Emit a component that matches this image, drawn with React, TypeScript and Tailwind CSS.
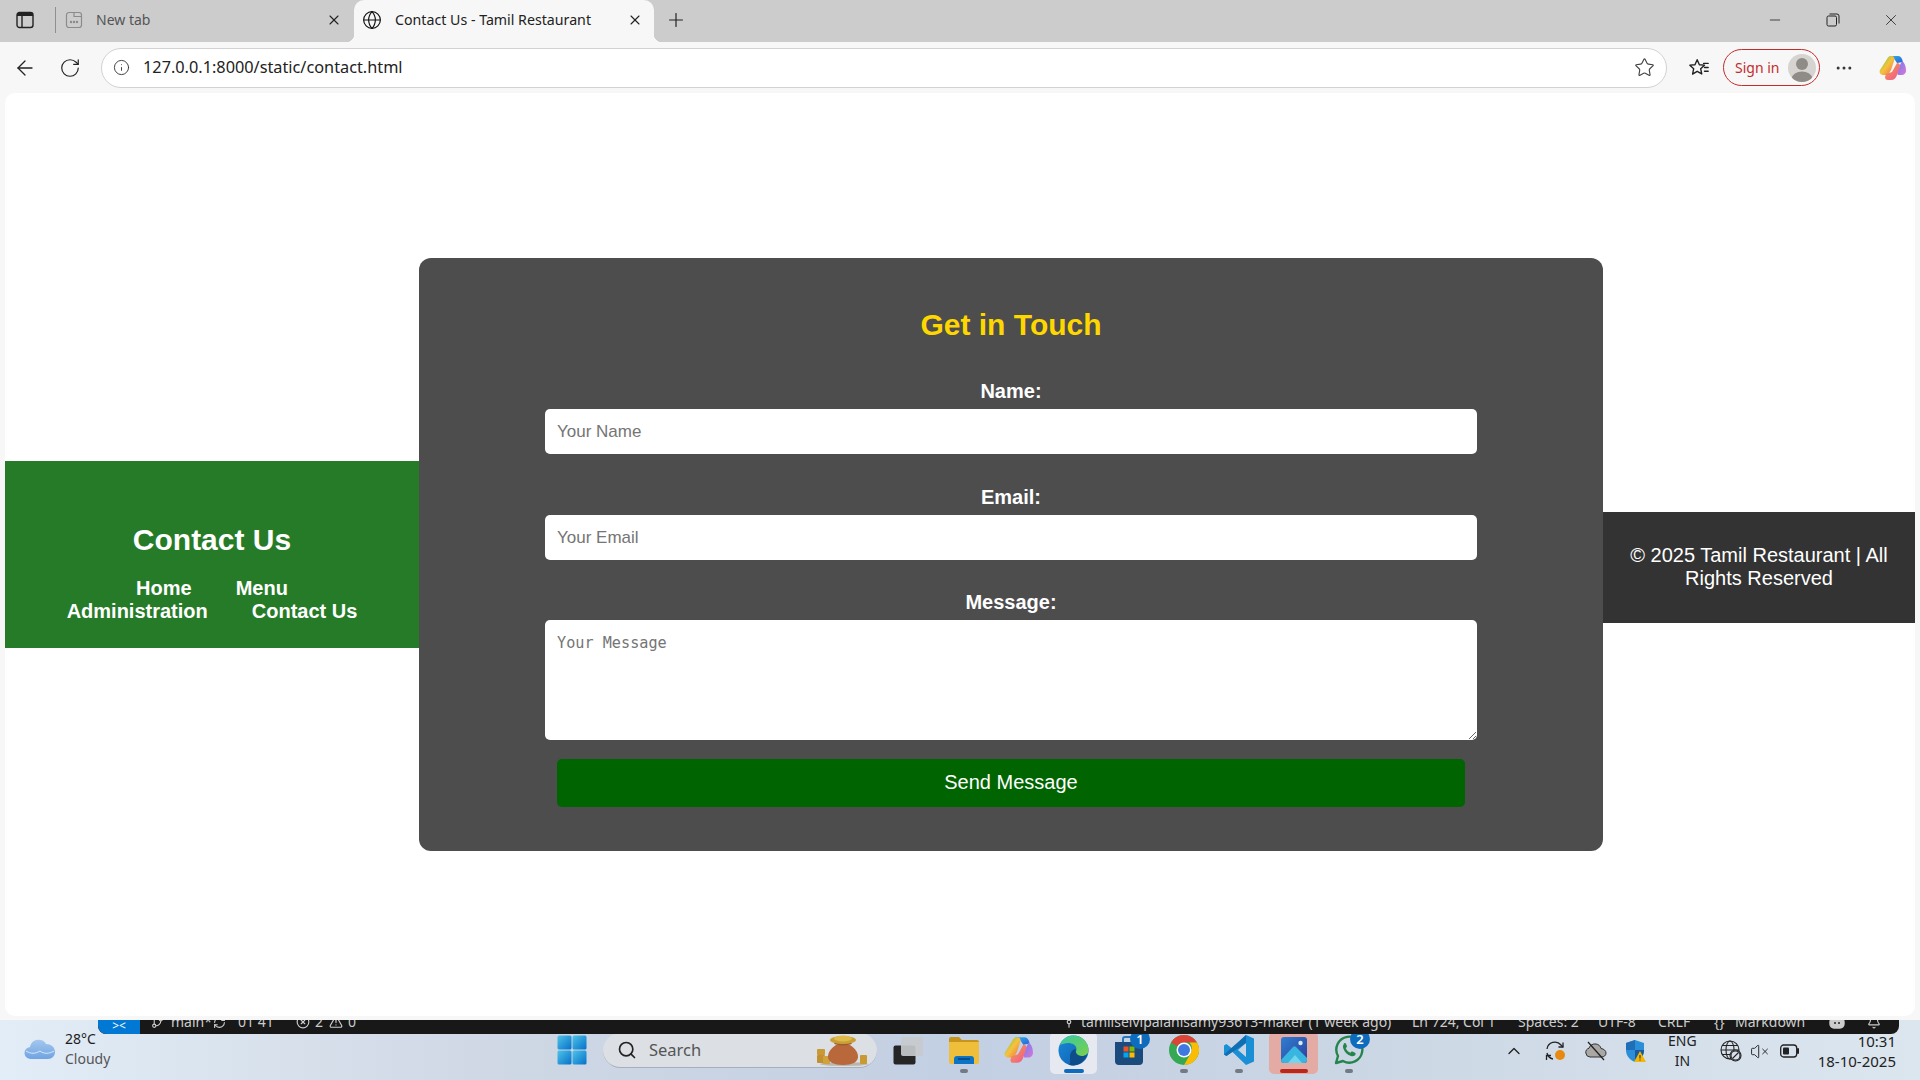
import React from "react";
import {
  ArrowLeft, RotateCw, Info, Star, Globe, X, Plus, Minus, MoreHorizontal, Search, ChevronUp,
  GitBranch, RefreshCw, XCircle, AlertTriangle, Bell, GitCommitVertical, VolumeX,
} from "lucide-react";

const CopilotIcon = ({ size = 28 }: { size?: number }) => (
  <svg width={size} height={size} viewBox="0 0 28 28">
    <defs>
      <linearGradient id="c1" x1="0" y1="0" x2="1" y2="1"><stop offset="0" stopColor="#2fb4e8" /><stop offset="1" stopColor="#2a5fd8" /></linearGradient>
      <linearGradient id="c2" x1="0" y1="0" x2="1" y2="1"><stop offset="0" stopColor="#5ac85a" /><stop offset="0.5" stopColor="#f5c33c" /><stop offset="1" stopColor="#ef6a4a" /></linearGradient>
      <linearGradient id="c3" x1="0" y1="0" x2="1" y2="1"><stop offset="0" stopColor="#6a7cf0" /><stop offset="1" stopColor="#d977d8" /></linearGradient>
      <linearGradient id="c4" x1="0" y1="0" x2="1" y2="1"><stop offset="0" stopColor="#f4a03a" /><stop offset="1" stopColor="#f0569a" /></linearGradient>
    </defs>
    <path d="M10 2h9c2 0 3 1 4 3l1 3-6 1-2-3c-1-2-3-3-6-4z" fill="url(#c1)" />
    <path d="M8 5c1-2 2-3 4-3 3 0 4 2 3 5l-3 9-3 5H4c-3 0-4-3-3-5z" fill="url(#c2)" />
    <path d="M23 7c3 2 4 6 4 10 0 2-2 4-4 4h-4l-1-2 3-8z" fill="url(#c3)" />
    <path d="M7 20l6-2 5-9c2 0 3 1 3 3l-3 9c-1 3-3 5-6 5H9c-2 0-3-1-3-3z" fill="url(#c4)" />
  </svg>
);

const FavIcon = () => (
  <svg width="22" height="22" viewBox="0 0 24 24" fill="none" stroke="#222" strokeWidth="1.5" strokeLinejoin="round">
    <path d="M10 3l2.4 5.4 5.6.5-4.2 3.900 1.200 5.700L10 15.600l-5 3 1.200-5.800L2 8.900l5.600-.5z" />
    <path d="M17 7h5M18 11.500h4M18 15.500h4" strokeLinecap="round" />
  </svg>
);

const RestoreIcon = () => (
  <svg width="14" height="14" viewBox="0 0 14 14" fill="none" stroke="#222" strokeWidth="1">
    <rect x="1" y="3" width="9.500" height="10" rx="1.500" />
    <path d="M3.500 1h7.500a2 2 0 0 1 2 2v7.500" />
  </svg>
);

const NewTabIcon = () => (
  <svg width="18" height="18" viewBox="0 0 18 18" fill="none" stroke="#8b8b8b" strokeWidth="1.200">
    <rect x="1.500" y="1.500" width="15" height="15" rx="2.500" />
    <path d="M9 1.500v4h7.500" />
    <circle cx="6" cy="11" r=".6" fill="#8b8b8b" />
    <circle cx="9" cy="11" r=".6" fill="#8b8b8b" />
    <circle cx="12" cy="11" r=".6" fill="#8b8b8b" />
  </svg>
);

const SideTabIcon = () => (
  <svg width="18" height="18" viewBox="0 0 18 18" fill="none">
    <rect x="1" y="1.500" width="16" height="15" rx="2.500" stroke="#222" strokeWidth="1.400" />
    <path d="M1 5V4a2.500 2.500 0 0 1 2.500-2.500h11A2.500 2.500 0 0 1 17 4v1z" fill="#222" />
    <path d="M6 5v11" stroke="#222" strokeWidth="1.400" />
  </svg>
);

const Avatar = () => (
  <span className="flex h-[28px] w-[28px] items-center justify-center overflow-hidden rounded-full bg-[#d6d4d1]">
    <svg width="28" height="28" viewBox="0 0 28 28">
      <circle cx="14" cy="10" r="6" fill="#8f8b87" />
      <ellipse cx="14" cy="24" rx="10" ry="6.500" fill="#8f8b87" />
    </svg>
  </span>
);

const WeatherCloud = () => (
  <svg width="32" height="24" viewBox="0 0 32 24">
    <defs>
      <linearGradient id="wc" x1="0" y1="0" x2="0" y2="1"><stop offset="0" stopColor="#a4c7ee" /><stop offset="1" stopColor="#6fa4e2" /></linearGradient>
    </defs>
    <path d="M7 22a6 6 0 0 1-1-12c1-5 5-8 10-7 3 0 5 2 6 4 5 0 9 3 9 8 0 4-3 7-7 7z" fill="url(#wc)" />
    <path d="M2 14c5 3 9 3 14 0 4 3 9 3 14 0" stroke="#d9e8f8" strokeWidth="1" fill="none" />
  </svg>
);

const WinLogo = () => (
  <svg width="30" height="30" viewBox="0 0 30 30">
    <defs>
      <linearGradient id="wl" x1="0" y1="0" x2="1" y2="1"><stop offset="0" stopColor="#4fc3e8" /><stop offset="1" stopColor="#0571c9" /></linearGradient>
    </defs>
    <rect x="0.500" y="0.500" width="14" height="14" rx="1.500" fill="url(#wl)" />
    <rect x="15.500" y="0.500" width="14" height="14" rx="1.500" fill="url(#wl)" />
    <rect x="0.500" y="15.500" width="14" height="14" rx="1.500" fill="url(#wl)" />
    <rect x="15.500" y="15.500" width="14" height="14" rx="1.500" fill="url(#wl)" />
  </svg>
);

const PotIcon = () => (
  <svg width="54" height="32" viewBox="0 0 54 32">
    <ellipse cx="28" cy="30" rx="24" ry="2" fill="#b9b6ad" />
    <rect x="1" y="15" width="8" height="6" rx="1" fill="#c99a33" />
    <rect x="1" y="21" width="8" height="8" rx="1" fill="#c29030" />
    <rect x="7" y="22" width="7" height="8" rx="1" fill="#d0a23c" />
    <rect x="44" y="21" width="7" height="9" rx="1" fill="#c99a33" />
    <path d="M20 11c-6 4-8 8-8 12 0 5 6 8 15 8s15-3 15-8c0-4-2-8-8-12z" fill="#b8683a" />
    <ellipse cx="27" cy="9" rx="9" ry="2.500" fill="#a05a30" />
    <ellipse cx="27" cy="6" rx="13" ry="4" fill="#c9a035" />
    <ellipse cx="27" cy="4.500" rx="9" ry="3" fill="#dfb94a" />
  </svg>
);

const TaskViewIcon = () => (
  <svg width="31" height="29" viewBox="0 0 31 29">
    <rect x="0.500" y="9.500" width="22" height="19" rx="2" fill="#262626" />
    <rect x="8" y="1" width="22" height="19" rx="2" fill="#c7cacd" fillOpacity="0.92" />
  </svg>
);

const FolderIcon = () => (
  <svg width="30" height="27" viewBox="0 0 30 27">
    <path d="M0 2a2 2 0 0 1 2-2h8l3 3h15a2 2 0 0 1 2 2v4H0z" fill="#c8951c" />
    <path d="M0 5h30v20a2 2 0 0 1-2 2H2a2 2 0 0 1-2-2z" fill="#efbf3c" />
    <path d="M5 22a3 3 0 0 1 3-3h14a3 3 0 0 1 3 3v5H5z" fill="#0c74c4" />
    <path d="M9 22h12" stroke="#083f78" strokeWidth="1.500" />
  </svg>
);

const EdgeIcon = () => (
  <svg width="31" height="31" viewBox="0 0 31 31">
    <defs>
      <linearGradient id="e1" x1="0" y1="0" x2="1" y2="1"><stop offset="0" stopColor="#36c9a4" /><stop offset="1" stopColor="#7cd04a" /></linearGradient>
      <linearGradient id="e2" x1="0" y1="0" x2="1" y2="1"><stop offset="0" stopColor="#1a8ad8" /><stop offset="1" stopColor="#0e5cae" /></linearGradient>
    </defs>
    <circle cx="15.500" cy="15.500" r="15" fill="url(#e2)" />
    <path d="M2 10C5 3 10 .5 15.500 .5 24 .5 30.500 7 30.500 15c0 4-3 6-7 6-3 0-6-1.500-6-3.500 0-1 1-1.500 1-3.500C18.500 10 14 8 10 8c-3 0-6 1-8 2z" fill="url(#e1)" />
    <path d="M12 22c0-5 3-8 6-8-1 2 0 7 6 7 2 0 4-.5 5-2-2 7-8 11.500-14 11.500-2 0-3.500-.5-5-1 3 0 2-3.500 2-7.500z" fill="#0f4c8a" />
  </svg>
);

const StoreIcon = () => (
  <svg width="30" height="30" viewBox="0 0 30 30">
    <path d="M1 7h28v19a4 4 0 0 1-4 4H5a4 4 0 0 1-4-4z" fill="#1b4a7c" />
    <path d="M9 7V4a2 2 0 0 1 2-2h8a2 2 0 0 1 2 2v3" fill="none" stroke="#2a76b8" strokeWidth="2" />
    <rect x="9.500" y="11.500" width="5" height="5" fill="#f25022" />
    <rect x="15.500" y="11.500" width="5" height="5" fill="#7fba00" />
    <rect x="9.500" y="17.500" width="5" height="5" fill="#00a4ef" />
    <rect x="15.500" y="17.500" width="5" height="5" fill="#ffb900" />
  </svg>
);

const ChromeIcon = () => (
  <svg width="30" height="30" viewBox="0 0 30 30">
    <circle cx="15" cy="15" r="15" fill="#34a853" />
    <path d="M15 0a15 15 0 0 1 13 7.500H15a7.500 7.500 0 0 0-6.500 3.750L2 7.500A15 15 0 0 1 15 0z" fill="#db4437" />
    <path d="M28 7.500A15 15 0 0 1 15 30l6.500-11.250A7.500 7.500 0 0 0 22.500 15a7.500 7.500 0 0 0-2-7.500z" fill="#fbbc05" />
    <circle cx="15" cy="15" r="7.500" fill="#fff" />
    <circle cx="15" cy="15" r="6" fill="#3f78e0" />
  </svg>
);

const VSCodeIcon = () => (
  <svg width="30" height="30" viewBox="0 0 30 30">
    <path d="M22 0l8 3.500v23L22 30 8 16.500 2.500 21 0 19.500v-9L2.500 9 8 13.500z M22 8l-8 7 8 7z" fill="#1a8fd6" fillRule="evenodd" />
    <path d="M0 19.500L22 0v8L2.500 21z" fill="#0f6fb4" />
  </svg>
);

const PhotosIcon = () => (
  <svg width="26" height="26" viewBox="0 0 26 26">
    <defs>
      <linearGradient id="p1" x1="0" y1="0" x2="1" y2="1"><stop offset="0" stopColor="#2f7fd2" /><stop offset="1" stopColor="#2c3f9a" /></linearGradient>
    </defs>
    <rect width="26" height="26" rx="3" fill="url(#p1)" />
    <circle cx="19.500" cy="6" r="2.200" fill="#dbe8f8" />
    <path d="M0 23l12-13c1-1 2-1 3 0l11 11v2a3 3 0 0 1-3 3H3a3 3 0 0 1-3-3z" fill="#38b6e0" />
    <path d="M7 26l7-8 7 8z" fill="#70d6ee" />
  </svg>
);

const WhatsAppIcon = () => (
  <svg width="30" height="30" viewBox="0 0 30 30" fill="none">
    <path d="M2 28l2-7A13 13 0 1 1 9 26z" stroke="#25844c" strokeWidth="2.400" strokeLinejoin="round" />
    <path d="M10.500 8.500c-1.500 1-2 3-1 5.500 1.500 3.500 4 6 7.500 7 2 .5 4 0 4.500-1.500.3-1 0-1.500-.5-1.800l-2.500-1.200c-.5-.2-1-.1-1.300.3l-.7 1c-2.200-.7-4-2.500-4.800-4.700l.9-.8c.4-.4.5-.8.300-1.300l-1-2.400c-.4-.6-1.500-.7-2.400-.1z" fill="#25844c" />
  </svg>
);

const SyncBadgeIcon = () => (
  <svg width="22" height="22" viewBox="0 0 22 22" fill="none" stroke="#222" strokeWidth="1.300">
    <path d="M3 9a8 8 0 0 1 14-4l2 2" /><path d="M19 2.500V7h-4.500" />
    <path d="M3 13a8 8 0 0 0 6 6" /><path d="M2.500 20v-4.500H7" />
    <circle cx="16" cy="15" r="5" fill="#e88a10" stroke="none" />
  </svg>
);

const CloudOffFilled = () => (
  <svg width="22" height="20" viewBox="0 0 22 20">
    <path d="M5 16a4.500 4.500 0 0 1-1-8.800C5 4 8 2.500 11 3c2.500.3 4.500 2 5 4.500 2.800.3 5 2.300 5 4.500 0 2.500-2 4-4.500 4z" fill="#a9a8a4" stroke="#333" strokeWidth="1" />
    <path d="M3 1l16 18" stroke="#222" strokeWidth="1.300" />
  </svg>
);

const ShieldIcon = () => (
  <svg width="22" height="24" viewBox="0 0 22 24">
    <path d="M10 1l9 3v7c0 6-4 10-9 12-5-2-9-6-9-12V4z" fill="#2a8fd8" />
    <path d="M1 11h9V1l-9 3z" fill="#1e6fb8" />
    <path d="M10 11h9c0 6-4 10-9 12z" fill="#175a9e" />
    <path d="M15 12l6 11H9z" fill="#f2b705" />
    <path d="M15 16v3.500M15 20.500v1" stroke="#222" strokeWidth="1" />
  </svg>
);

const GlobeOff = () => (
  <svg width="22" height="22" viewBox="0 0 22 22" fill="none" stroke="#222" strokeWidth="1.100">
    <circle cx="10" cy="10" r="9" />
    <ellipse cx="10" cy="10" rx="4" ry="9" />
    <path d="M1 10h18M2 5.500h16M2 14.500h16" />
    <circle cx="15.500" cy="15.500" r="5.500" fill="#d7e1eb" />
    <circle cx="15.500" cy="15.500" r="4.500" />
    <path d="M12.500 18.500l6-6" />
  </svg>
);

const BatteryIcon = () => (
  <svg width="20" height="14" viewBox="0 0 20 14" fill="none">
    <rect x="0.700" y="1" width="16" height="12" rx="3" stroke="#222" strokeWidth="1.300" />
    <rect x="3" y="3.500" width="6" height="7" rx="1" fill="#222" />
    <path d="M18 5v4" stroke="#222" strokeWidth="2" strokeLinecap="round" />
  </svg>
);

const CopilotStatus = () => (
  <svg width="16" height="14" viewBox="0 0 16 14" fill="none" stroke="#cccccc" strokeWidth="1.400">
    <rect x="1" y="3" width="14" height="10" rx="4" fill="#cccccc" />
    <path d="M6 7v2M10 7v2" stroke="#181818" />
  </svg>
);

const TaskSlot = ({ children, indicator, active, pink, badge }: { children: React.ReactNode; indicator?: string; active?: boolean; pink?: boolean; badge?: string }) => (
  <div className="relative flex h-[42px] w-[55px] shrink-0 items-center justify-center">
    {active && <span className="absolute inset-x-[4px] inset-y-0 rounded-[5px] bg-[#e6e9ef]" />}
    {pink && <span className="absolute inset-x-[3px] inset-y-0 rounded-[5px] bg-[#e4aaa4]" />}
    <span className="relative mb-[6px] flex">{children}</span>
    {badge && (
      <span className="absolute right-[6px] top-[-3px] flex h-[20px] w-[20px] items-center justify-center rounded-full bg-[#0f6cbd] font-['Noto_Sans'] text-[13px] font-semibold leading-none text-white">{badge}</span>
    )}
    {indicator && <span className={`absolute bottom-[1px] left-1/2 h-[4px] -translate-x-1/2 rounded-full ${indicator}`} />}
  </div>
);

const Field = ({ label, placeholder }: { label: string; placeholder: string }) => (
  <div className="flex flex-col items-center">
    <label className="pt-px text-[20px] font-bold leading-[22px] text-white">{label}</label>
    <input placeholder={placeholder} className="mt-[7px] h-[45px] w-[932px] rounded-[5px] bg-white px-[12px] text-[17px] text-black outline-none placeholder:text-[#757575]" />
  </div>
);

export default function App() {
  return (
    <div className="flex h-screen w-full flex-col overflow-hidden bg-[#f7f7f7] font-['Noto_Sans',sans-serif]">
      {/* tab strip */}
      <div className="flex h-[42px] shrink-0 items-center bg-[#cccccc]">
        <div className="mb-[3px] ml-[16px] flex w-[18px] justify-center"><SideTabIcon /></div>
        <div className="mb-[3px] ml-[21px] h-[26px] w-px bg-[#8f8f8f]" />
        <div className="mb-[3px] ml-[9px] flex"><NewTabIcon /></div>
        <span className="mb-[3px] ml-[13px] w-[230px] text-[14px] text-[#555]">New tab</span>
        <X size={16} strokeWidth={1.600} className="mb-[3px] text-[#222]" />
        <div className="relative ml-[12px] flex h-[42px] w-[300px] items-center rounded-t-[10px] bg-[#f7f7f7] pb-[3px] pl-[8px]">
          <span className="absolute bottom-0 left-[-8px] h-[8px] w-[8px] bg-[radial-gradient(circle_at_0_0,#cccccc_8px,#f7f7f7_8.500px)]" />
          <span className="absolute bottom-0 right-[-8px] h-[8px] w-[8px] bg-[radial-gradient(circle_at_100%_0,#cccccc_8px,#f7f7f7_8.500px)]" />
          <Globe size={20} strokeWidth={1.400} className="text-[#111]" />
          <span className="ml-[13px] w-[232px] whitespace-nowrap text-[14.200px] text-[#222]">Contact Us - Tamil Restaurant</span>
          <X size={16} strokeWidth={1.600} className="text-[#222]" />
        </div>
        <Plus size={22} strokeWidth={1.300} className="mb-[3px] ml-[11px] text-[#222]" />
        <div className="ml-auto mb-[3px] flex items-center">
          <Minus size={16} strokeWidth={1.200} className="text-[#222]" />
          <div className="ml-[43px] flex"><RestoreIcon /></div>
          <X size={18} strokeWidth={1.100} className="ml-[42px] mr-[20px] text-[#222]" />
        </div>
      </div>
      {/* toolbar */}
      <div className="flex h-[51px] shrink-0 items-center bg-[#f7f7f7]">
        <ArrowLeft size={24} strokeWidth={1.300} className="ml-[13px] text-[#222]" />
        <RotateCw size={22} strokeWidth={1.300} className="ml-[22px] text-[#222]" />
        <div className="ml-[20px] flex h-[40px] w-[1566px] items-center rounded-full border border-[#d2d2d2] bg-white pl-[11px] pr-[11px]">
          <Info size={17} strokeWidth={1.300} className="text-[#333]" />
          <span className="ml-[13px] text-[16.300px] text-[#222]">127.0.0.1:8000/static/contact.html</span>
          <Star size={21} strokeWidth={1.300} className="ml-auto text-[#444]" />
        </div>
        <div className="ml-[21px] flex"><FavIcon /></div>
        <div className="ml-[13px] flex h-[37px] w-[97px] items-center justify-between rounded-full border-[1.500px] border-[#c42b2b] pl-[11px] pr-[3px]">
          <span className="text-[14px] text-[#c42b2b]">Sign in</span>
          <Avatar />
        </div>
        <MoreHorizontal size={20} strokeWidth={1.600} className="ml-[14px] text-[#333]" />
        <div className="ml-[25px] flex"><CopilotIcon /></div>
      </div>
      {/* page */}
      <div className="mx-[5px] flex min-h-0 flex-1 items-center overflow-hidden rounded-[10px] bg-white font-['Liberation_Sans',Arial,sans-serif]">
        <header className="flex h-[187px] w-[414px] shrink-0 flex-col items-center bg-[#267b28] pt-[62px] text-white">
          <h1 className="text-[30px] font-bold leading-[34px]">Contact Us</h1>
          <nav className="mt-[20px] text-center text-[20px] font-bold leading-[23px]">
            <div className="flex justify-center gap-[44px]"><span>Home</span><span>Menu</span></div>
            <div className="flex justify-center gap-[44px]"><span>Administration</span><span>Contact Us</span></div>
          </nav>
        </header>
        <main className="flex h-[593px] w-[1184px] shrink-0 flex-col items-center rounded-[12px] bg-[#4d4d4d] pt-[50px]">
          <h2 className="text-[30px] font-bold leading-[34px] text-[#ffd700]">Get in Touch</h2>
          <div className="mt-[37px] flex flex-col gap-[31px]">
            <Field label="Name:" placeholder="Your Name" />
            <Field label="Email:" placeholder="Your Email" />
            <div className="flex flex-col items-center">
              <label className="text-[20px] font-bold leading-[23px] text-white">Message:</label>
              <textarea placeholder="Your Message" className="mt-[6px] h-[120px] w-[932px] rounded-[5px] bg-white px-[12px] py-[14px] font-['DejaVu_Sans_Mono',monospace] text-[15.200px] leading-[18px] text-black outline-none placeholder:text-[#757575]" />
            </div>
          </div>
          <button className="mt-[19px] h-[48px] w-[908px] rounded-[5px] bg-[#006400] pb-[2px] text-[20px] text-white">Send Message</button>
        </main>
        <footer className="mt-[26px] flex h-[111px] flex-1 items-center justify-center bg-[#333333] px-[20px] pb-[2px] text-center text-[20px] leading-[23px] text-white">
          <p>© 2025 Tamil Restaurant | All Rights Reserved</p>
        </footer>
      </div>
      <div className="h-[4px] shrink-0 bg-[#f7f7f7]" />
      {/* taskbar */}
      <div className="relative flex h-[60px] shrink-0 items-center bg-[linear-gradient(90deg,#e3edf7_0%,#cfd8e4_25%,#c3cfe3_50%,#cbd6e4_70%,#dbe6ef_100%)]">
        {/* docked editor status bar peeking over */}
        <div className="absolute left-[98px] right-[21px] top-0 z-10 flex h-[14px] items-end overflow-hidden rounded-b-[8px] bg-[#181818] font-['Noto_Sans'] text-[14px] leading-[18px] text-[#cccccc]">
          <div className="flex h-[14px] w-[42px] shrink-0 items-end justify-center rounded-bl-[8px] bg-[#0078d4] pb-[2px] text-[12px] leading-none text-white">&gt;&lt;</div>
          <div className="flex h-[18px] shrink-0 translate-y-[-3px] items-center">
            <GitBranch size={13} className="ml-[11px]" />
            <span className="ml-[7px] w-[42px]">main*</span>
            <RefreshCw size={13} />
            <span className="ml-[12px] w-[50px]">01 41</span>
            <XCircle size={14} className="ml-[8px]" />
            <span className="ml-[5px]">2</span>
            <AlertTriangle size={14} className="ml-[6px]" />
            <span className="ml-[5px]">0</span>
          </div>
          <div className="ml-auto flex h-[18px] shrink-0 translate-y-[-3px] items-center">
            <GitCommitVertical size={14} />
            <span className="ml-[5px] w-[331px] whitespace-nowrap">tamilselvipalanisamy93613-maker (1 week ago)</span>
            <span className="w-[106px] whitespace-nowrap">Ln 724, Col 1</span>
            <span className="w-[80px] whitespace-nowrap">Spaces: 2</span>
            <span className="w-[60px] whitespace-nowrap">UTF-8</span>
            <span className="w-[56px] whitespace-nowrap">CRLF</span>
            <span className="w-[21px]">{"{}"}</span>
            <span className="w-[94px] whitespace-nowrap">Markdown</span>
            <span className="flex w-[38px]"><CopilotStatus /></span>
            <Bell size={14} className="mr-[18px]" />
          </div>
        </div>
        {/* weather */}
        <div className="ml-[24px] mb-[2px] flex w-[526px] items-center self-stretch">
          <WeatherCloud />
          <div className="ml-[9px] text-[14px] leading-[20px]">
            <div className="text-[#1d1d1d]">28°C</div>
            <div className="text-[#555]">Cloudy</div>
          </div>
        </div>
        {/* centre */}
        <div className="mb-[6px] flex items-center self-end">
          <div className="ml-[7px] flex h-[42px] items-center pb-[6px]"><WinLogo /></div>
          <div className="ml-[16px] mb-[5px] flex h-[35px] w-[274px] items-center rounded-full border-b border-[#a7afbb] bg-[#dcdfe4] pl-[14px]">
            <Search size={20} strokeWidth={2} className="text-[#222]" />
            <span className="ml-[12px] w-[167px] text-[16.500px] text-[#555]">Search</span>
            <PotIcon />
          </div>
          <div className="ml-[4px] flex"><TaskSlot><TaskViewIcon /></TaskSlot></div>
          <TaskSlot indicator="w-[8px] bg-[#747a84]"><FolderIcon /></TaskSlot>
          <TaskSlot><CopilotIcon size={30} /></TaskSlot>
          <TaskSlot active indicator="w-[20px] bg-[#0f6cbd]"><EdgeIcon /></TaskSlot>
          <TaskSlot badge="1"><StoreIcon /></TaskSlot>
          <TaskSlot indicator="w-[8px] bg-[#747a84]"><ChromeIcon /></TaskSlot>
          <TaskSlot indicator="w-[8px] bg-[#747a84]"><VSCodeIcon /></TaskSlot>
          <TaskSlot pink indicator="w-[28px] bg-[#b8281c]"><PhotosIcon /></TaskSlot>
          <TaskSlot badge="2" indicator="w-[8px] bg-[#747a84]"><WhatsAppIcon /></TaskSlot>
        </div>
        {/* tray */}
        <div className="ml-auto flex items-center pt-[2px] pr-[24px] text-[#222]">
          <ChevronUp size={20} strokeWidth={1.600} />
          <span className="ml-[20px] flex"><SyncBadgeIcon /></span>
          <span className="ml-[19px] flex"><CloudOffFilled /></span>
          <span className="ml-[18px] flex"><ShieldIcon /></span>
          <div className="ml-[21px] text-center text-[14px] leading-[20px]">ENG<br />IN</div>
          <span className="ml-[23px] flex"><GlobeOff /></span>
          <VolumeX size={19} strokeWidth={1.200} className="ml-[8px]" />
          <span className="ml-[11px] flex"><BatteryIcon /></span>
          <div className="ml-[18px] text-right text-[15px] leading-[20px]">10:31<br />18-10-2025</div>
        </div>
      </div>
    </div>
  );
}
